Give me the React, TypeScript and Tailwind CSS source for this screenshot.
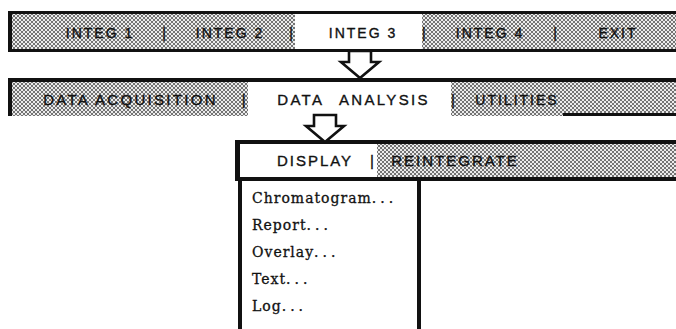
import React from "react";

const dither =
  "bg-[#ebebeb] bg-[radial-gradient(circle,#707070_0.7px,transparent_1.1px),radial-gradient(circle,#707070_0.7px,transparent_1.1px)] bg-[length:4px_4px] bg-[position:0_0,2px_2px]";

function Arrow() {
  return (
    <svg width="42" height="28" viewBox="0 0 42 28" className="block overflow-visible">
      <polygon
        points="10,-1 32,-1 32,10 40,10 21,26 2,10 10,10"
        fill="white"
        stroke="#111"
        strokeWidth="2.6"
        strokeLinejoin="miter"
      />
    </svg>
  );
}

export default function App() {
  return (
    <div className="w-[676px] h-[329px] overflow-hidden bg-white text-[#111] font-['Liberation_Sans',Arial,sans-serif] [-webkit-text-stroke:0.35px_#111]">
      {/* Bar 1 */}
      <div className="mt-[11px] ml-[8px] h-[41px] flex border-t-[3px] border-b-[3px] border-l-[4px] border-[#111] text-[14px] tracking-[2px]">
        <div className={`${dither} w-[283px] shrink-0 flex items-center pt-[3px]`}>
          <span className="ml-[48px] w-[80px] text-center">INTEG 1</span>
          <span className="w-[50px] text-center">|</span>
          <span className="w-[80px] text-center">INTEG 2</span>
          <span className="w-[25px] text-right">|</span>
        </div>
        <div className="bg-white w-[127px] shrink-0 flex items-center pt-[3px]">
          <span className="pl-[9px] w-full text-center">INTEG 3</span>
        </div>
        <div className={`${dither} flex-1 flex items-center pt-[3px]`}>
          <span className="w-[6px] text-left">|</span>
          <span className="w-[124px] text-center">INTEG 4</span>
          <span className="w-[8px] text-center">|</span>
          <span className="w-[116px] text-center">EXIT</span>
        </div>
      </div>

      {/* Arrow 1 */}
      <div className="h-[26px] w-[42px] ml-[339px]">
        <Arrow />
      </div>

      {/* Bar 2 */}
      <div className="ml-[8px] w-[668px] h-[38px] flex border-t-[4px] border-l-[4px] border-[#111] text-[15px] tracking-[2.3px]">
        <div className={`${dither} w-[236px] shrink-0 flex items-center pt-[3px]`}>
          <span className="pl-[11px] w-[226px] text-center">DATA ACQUISITION</span>
          <span className="w-[10px] text-right">|</span>
        </div>
        <div className="bg-white w-[203px] shrink-0 flex items-center pt-[3px]">
          <span className="pl-[8px] w-full text-center [word-spacing:10px]">DATA ANALYSIS</span>
        </div>
        <div className={`${dither} grow flex items-stretch`}>
          <span className="w-[6px] shrink-0 flex items-center pt-[3px]">|</span>
          <span className="w-[106px] shrink-0 flex items-center justify-center pl-[14px] pt-[3px] text-[14px] tracking-[2px]">UTILITIES</span>
          <span className="grow shadow-[inset_0_-3px_0_0_#111]" />
        </div>
      </div>

      {/* Arrow 2 */}
      <div className="h-[24px] w-[42px] ml-[304px]">
        <Arrow />
      </div>

      {/* Bar 3 */}
      <div className="ml-[235px] h-[41px] flex border-t-[4px] border-b-[4px] border-l-[5px] border-[#111] text-[15px] tracking-[2px]">
        <div className="bg-white w-[137px] shrink-0 flex items-center pt-[1px]">
          <span className="pl-[20px] w-[130px] text-center">DISPLAY</span>
          <span className="w-[7px] text-left">|</span>
        </div>
        <div className={`${dither} flex-1 flex items-center pt-[1px]`}>
          <span className="w-[156px] text-center">REINTEGRATE</span>
        </div>
      </div>

      {/* Dropdown */}
      <div className="ml-[238px] w-[183px] h-[160px] border-l-[4px] border-r-[4px] border-[#111] pt-[4px] pl-[10px] font-['DejaVu_Serif',Georgia,serif] text-[14px] leading-[27px] tracking-[1px] [-webkit-text-stroke:0.3px_#111]">
        <div>Chromatogram<span className="tracking-[4px]">...</span></div>
        <div>Report<span className="tracking-[4px]">...</span></div>
        <div>Overlay<span className="tracking-[4px]">...</span></div>
        <div>Text<span className="tracking-[4px]">...</span></div>
        <div>Log<span className="tracking-[4px]">...</span></div>
      </div>
    </div>
  );
}
